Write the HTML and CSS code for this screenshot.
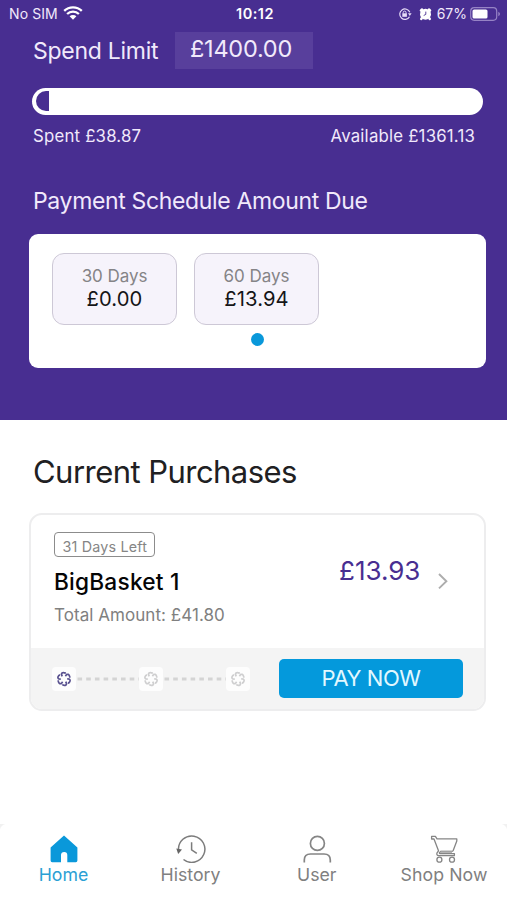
FILE: index.html
```html
<!DOCTYPE html>
<html lang="en">
<head>
<meta charset="utf-8">
<title>Spend Limit</title>
<link rel="stylesheet" href="styles.css">
</head>
<body>
<div class="app">
  <section class="hero">
    <div class="status">
      <div class="status-left"><span class="carrier">No SIM</span>
        <svg class="wifi" width="20" height="14" viewBox="0 0 20 14"><path d="M1.2 4.9A12.6 12.6 0 0 1 18.8 4.9M4.1 8A8.4 8.4 0 0 1 15.9 8" fill="none" stroke="#fff" stroke-width="2.3"/><path d="M6.6 10.3A4.8 4.8 0 0 1 13.4 10.3L10 13.8Z" fill="#fff"/></svg>
      </div>
      <span class="clock">10:12</span>
      <div class="status-right">
        <svg width="14" height="14" viewBox="0 0 14 14" fill="none" stroke="#e6dcf7" stroke-width="1.2"><path d="M11.5 9.7A5.2 5.2 0 1 1 11.8 5.3"/><path d="M10 6.3h3.6L11.8 9z" fill="#e6dcf7" stroke="none"/><path d="M5.2 6.6V5.5a1.4 1.4 0 0 1 2.8 0v1.1" stroke-width="1"/><rect x="4.3" y="6.3" width="4.6" height="3.5" fill="#e6dcf7" stroke="none"/></svg>
        <svg class="alarm" width="13" height="14" viewBox="0 0 13 14"><circle cx="6.5" cy="7.2" r="5.5" fill="#fff"/><path d="M2 3.4L3 2.6M11 3.4L10 2.6M2.6 11.4l-.3 .5M10.4 11.4l.3 .5" stroke="#fff" stroke-width="2.6" stroke-linecap="round"/><path d="M6.8 4.6v2.8L4.7 8.5" fill="none" stroke="#482e91" stroke-width=".9"/></svg>
        <span class="percent">67%</span>
        <svg class="battery" width="31" height="14" viewBox="0 0 31 14"><rect x=".7" y=".7" width="26" height="12.6" rx="3.5" fill="none" stroke="#9683c5" stroke-width="1.2"/><rect x="2.5" y="2.5" width="15" height="9" rx="1.6" fill="#fff"/><path d="M28.3 4.8Q30 5.6 30 7T28.3 9.2Z" fill="#9683c5"/></svg>
      </div>
    </div>
    <div class="limit"><span class="limit-label">Spend Limit</span><span class="limit-value"><span>£1400.00</span></span></div>
    <div class="meter"><div class="meter-fill"></div></div>
    <div class="meter-labels"><span class="spent">Spent £38.87</span><span class="available">Available £1361.13</span></div>
    <h2 class="schedule-title"><span>Payment Schedule Amount Due</span></h2>
    <div class="schedule">
      <div class="term"><span class="term-days">30 Days</span><span class="term-sum">£0.00</span></div>
      <div class="term"><span class="term-days">60 Days</span><span class="term-sum">£13.94</span><i class="dot"></i></div>
    </div>
  </section>

  <section class="purchases">
    <h1 class="purchases-title"><span>Current Purchases</span></h1>
    <article class="card">
      <div class="card-main">
        <div class="card-info">
          <span class="badge"><span>31 Days Left</span></span>
          <span class="merchant">BigBasket 1</span>
          <span class="total">Total Amount: £41.80</span>
        </div>
        <span class="price">£13.93</span>
        <svg class="chevron" width="12" height="18" viewBox="0 0 12 18"><path d="M2 2L9.4 9.2L2 16.4" fill="none" stroke="#adadad" stroke-width="1.9"/></svg>
      </div>
      <div class="card-foot">
        <div class="steps">
          <span class="step step-active"><svg width="16" height="16" viewBox="-8 -8 16 16"><use href="#rosette"/></svg></span>
          <svg class="dash" width="63" height="4" viewBox="0 0 63 4"><path d="M1.5 2H63" stroke="#d4d4d4" stroke-width="3" stroke-dasharray="4.6 4.1"/></svg>
          <span class="step"><svg width="16" height="16" viewBox="-8 -8 16 16"><use href="#rosette"/></svg></span>
          <svg class="dash" width="63" height="4" viewBox="0 0 63 4"><path d="M1.5 2H63" stroke="#d4d4d4" stroke-width="3" stroke-dasharray="4.6 4.1"/></svg>
          <span class="step"><svg width="16" height="16" viewBox="-8 -8 16 16"><use href="#rosette"/></svg></span>
        </div>
        <button class="pay"><span>PAY NOW</span></button>
      </div>
    </article>
  </section>

  <nav class="tabs">
    <a class="tab tab-active">
      <svg width="30" height="28" viewBox="0 0 30 28"><path d="M15 .6L28.4 12.6V25.6Q28.4 27.2 26.8 27.2H18.3V20Q18.3 17 15.2 17T12 20V27.2H3.2Q1.6 27.2 1.6 25.6V12.6Z" fill="#0a98da"/></svg>
      <span>Home</span></a>
    <a class="tab">
      <svg width="30" height="28" viewBox="0 0 30 28" fill="none" stroke="#7c7c7c" stroke-width="1.5"><path d="M2.5 15A13.2 13.2 0 1 1 7.5 24.5"/><path d="M.3 13.5L6 14.6L2.2 19Z" fill="#666" stroke="none"/><path d="M15.6 7.3V14.8L20.8 18.3"/></svg>
      <span>History</span></a>
    <a class="tab tab-user">
      <svg width="30" height="28" viewBox="0 0 30 28" fill="none" stroke="#858585" stroke-width="1.7"><circle cx="15.4" cy="8.4" r="7"/><path d="M2.3 27.5V25Q2.3 19 8.5 19H22Q28.3 19 28.3 25V27.5"/></svg>
      <span>User</span></a>
    <a class="tab tab-shop">
      <svg width="30" height="28" viewBox="0 0 30 28" fill="none" stroke="#858585" stroke-width="1.3" stroke-linejoin="round"><path d="M2.6 1.3H6.4L8 3.9H27.8V6L24.2 15.4Q23.8 16.4 22.6 16.4H11.6L10.4 18Q10.4 18.6 11.2 18.6H25.4V20.7H9.6Q7.4 20.4 7.9 18.2L9.5 15.8L5 4H2.6Z"/><path d="M11.6 16.8H23" stroke-width="2" stroke="#a2a2a2"/><circle cx="10.4" cy="24.7" r="2.5"/><circle cx="23" cy="24.7" r="2.5"/></svg>
      <span>Shop Now</span></a>
  </nav>
</div>
<svg class="defs" width="0" height="0"><defs>
  <g id="rosette" fill="none" stroke="currentColor" stroke-width="1.7"><path id="petal" d="M-1.8 -2.6L-2.5 -4.6Q-2.4 -6.5 -.2 -6.3Q1.2 -6.3 1.7 -5.4"/><use href="#petal" transform="rotate(60)"/><use href="#petal" transform="rotate(120)"/><use href="#petal" transform="rotate(180)"/><use href="#petal" transform="rotate(240)"/><use href="#petal" transform="rotate(300)"/></g>
</defs></svg>
</body>
</html>
```
FILE: styles.css
```css
* { box-sizing: border-box; }
body { margin: 0; background: #fff; font-family: Inter, "Liberation Sans", sans-serif; }
span { white-space: nowrap; }
svg { display: block; flex: none; }
h1, h2 { margin: 0; font-weight: 400; }
.defs { position: absolute; }
.app { width: 507px; height: 900px; display: flex; flex-direction: column; overflow: hidden; }

.hero { height: 420px; background: #482e91; color: #f1e9fb; flex: none; }
.status { height: 27px; display: grid; grid-template-columns: 1fr auto 1fr; align-items: center; padding: 0 6px 0 9px; font-size: 14px; }
.status-left, .status-right { display: flex; align-items: center; }
.wifi { margin-left: 5px; margin-top: -2px; }
.carrier { letter-spacing: .1px; }
.clock { font-weight: 600; color: #fff; font-size: 14.5px; letter-spacing: .5px; }
.status-right { justify-content: flex-end; }
.alarm { margin: 0 5px 0 7px; }
.battery { margin-left: 3px; }

.limit { display: flex; height: 41px; margin-top: 5px; padding-left: 33px; align-items: flex-start; }
.limit-label { width: 142px; font-size: 23px; line-height: 38px; letter-spacing: -.27px; }
.limit-value { width: 138px; height: 37px; background: #583f9c; font-size: 23.5px; line-height: 34px; padding-left: 15px; letter-spacing: -.25px; }

.meter { margin: 15px 24px 0 32px; height: 27px; border-radius: 14px; background: #fff; padding: 3px 4px; }
.meter-fill { width: 13px; height: 20px; background: #482e91; border-radius: 10px 0 0 10px; }
.meter-labels { display: flex; justify-content: space-between; height: 24px; line-height: 24px; margin-top: 9px; padding: 0 32px 0 33px; font-size: 16.8px; letter-spacing: .2px; }
.schedule-title { margin-top: 37px; height: 32px; line-height: 32px; padding-left: 33px; font-size: 23px; letter-spacing: -.35px; }
.schedule { display: flex; gap: 17px; margin: 17px 21px 0 29px; height: 134px; padding: 19px 23px; border-radius: 9px; background: #fff; }
.term { position: relative; width: 125px; height: 72px; border: 1.5px solid #cdc8d6; border-radius: 12px; background: #f6f3fb; display: flex; flex-direction: column; align-items: center; padding-top: 11px; }
.term-days { font-size: 17px; line-height: 22px; color: #858487; letter-spacing: -.05px; }
.term-sum { font-size: 20.2px; line-height: 24px; color: #151517; letter-spacing: .1px; }
.dot { position: absolute; left: 56px; top: 79px; width: 13px; height: 13px; border-radius: 50%; background: #0a98da; }

.purchases { padding: 32px 21px 0 29px; height: 404px; flex: none; }
.purchases-title { height: 40px; line-height: 40px; padding-left: 4px; font-size: 31px; color: #202022; letter-spacing: -.54px; }
.card { margin-top: 21px; height: 198px; border: 2px solid #ededee; border-radius: 13px; overflow: hidden; }
.card-main { height: 133px; display: flex; padding: 17px 0 0 23px; }
.card-info { width: 285px; display: flex; flex-direction: column; align-items: flex-start; }
.badge { width: 101px; height: 25px; border: 1.5px solid #8c8c8c; border-radius: 4px; font-size: 14.3px; line-height: 27px; padding-left: 7.5px; color: #858585; letter-spacing: .2px; }
.merchant { margin-top: 10px; font-size: 22.7px; line-height: 30px; font-weight: 500; color: #050505; letter-spacing: .2px; }
.total { margin-top: 5px; font-size: 17px; line-height: 26px; color: #808080; letter-spacing: .05px; }
.price { width: 99px; margin-top: 22px; height: 34px; line-height: 34px; font-size: 26px; color: #482e91; }
.chevron { margin: 40px 0 0 -1px; }
.card-foot { height: 61px; background: #f4f4f4; display: flex; padding: 9px 21px 0 21px; justify-content: space-between; }
.steps { display: flex; align-items: center; height: 43px; }
.step { width: 24px; height: 24px; border-radius: 4px; background: #fdfdfd; display: flex; align-items: center; justify-content: center; color: #cfcfd0; }
.step-active { color: #5a5390; }
.pay { width: 184px; height: 39px; margin: 2px 0 0; border: 0; border-radius: 5px; background: #0499dc; color: #e2f8ff; font: 400 22px/39px Inter, "Liberation Sans", sans-serif; letter-spacing: -.45px; padding: 0; }

.tabs { display: grid; grid-template-columns: repeat(4, 127px); height: 76px; padding-top: 11px; color: #808080; background: radial-gradient(circle at 8px 8px, transparent 8px, #f1f1f1 9px) 0 0 / 8px 8px no-repeat, radial-gradient(circle at 0 8px, transparent 8px, #f1f1f1 9px) 499px 0 / 8px 8px no-repeat; }
.tab { display: flex; flex-direction: column; align-items: center; font-size: 17.7px; }
.tab span { line-height: 24px; }
.tab-active { color: #2b9fd4; }
.tab-user { padding-right: 1.5px; }
.tab-shop { letter-spacing: .1px; padding-right: 1px; }
```
